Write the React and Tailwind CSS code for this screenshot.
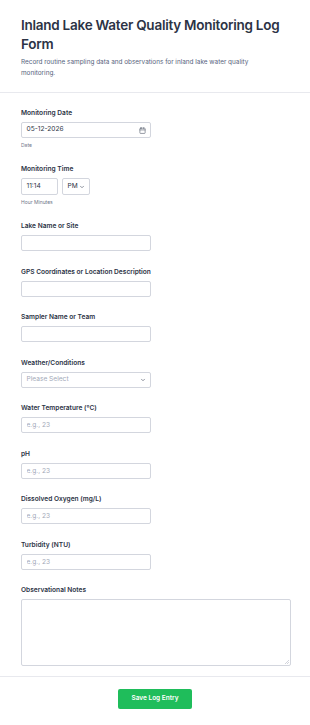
import React from 'react';

const labelCls = 'block h-[10px] leading-[10px] text-[6.6px] font-semibold text-[#2c3345] mb-[4px]';
const inputCls =
  'w-[130px] h-[16px] border border-[#d3d6de] rounded-[2px] bg-white px-[4.5px] text-[6.6px] text-[#2c3345] placeholder:text-[#a3a9b8] outline-none';

function Field({ label, children, sub }) {
  return (
    <div className="flex flex-col pb-[15.5px]">
      <label className={labelCls}>{label}</label>
      {children}
      {sub && (
        <span className="block h-[10.5px] pt-[4px] leading-[6px] text-[5px] text-[#6f7689]">{sub}</span>
      )}
    </div>
  );
}

function Chevron() {
  return (
    <svg width="6" height="6" viewBox="0 0 24 24" fill="none" stroke="#6b7280" strokeWidth="3" strokeLinecap="round" strokeLinejoin="round">
      <path d="m6 9 6 6 6-6" />
    </svg>
  );
}

function CalendarIcon() {
  return (
    <svg width="7" height="7" viewBox="0 0 24 24" fill="none" stroke="#6b7280" strokeWidth="2.4" strokeLinecap="round" strokeLinejoin="round">
      <rect x="3" y="4" width="18" height="18" rx="2" />
      <path d="M16 2v4M8 2v4M3 10h18" />
    </svg>
  );
}

export default function App() {
  return (
    <div className="min-h-screen bg-white" style={{ fontFamily: 'Inter, "Noto Sans", sans-serif' }}>
      {/* Header */}
      <header className="px-[21px] pt-[16px] pb-[13px] border-b border-[#e8e9ee]">
        <h1 className="text-[13.5px] leading-[19px] font-semibold text-[#2c3345] tracking-[-0.25px]">
          Inland Lake Water Quality Monitoring Log Form
        </h1>
        <p className="mt-[3px] max-w-[250px] text-[6.4px] leading-[11px] text-[#57647e]">
          Record routine sampling data and observations for inland lake water quality monitoring.
        </p>
      </header>

      {/* Form body */}
      <main className="px-[21px] pt-[15px] border-b border-[#e8e9ee]">
        <Field label="Monitoring Date" sub="Date">
          <div className={`${inputCls} flex items-center justify-between`}>
            <span>05-12-2026</span>
            <CalendarIcon />
          </div>
        </Field>

        <Field label="Monitoring Time" sub="Hour Minutes">
          <div className="flex gap-[4px]">
            <div className="w-[37px] h-[17px] border border-[#d3d6de] rounded-[2px] px-[4.5px] flex items-center text-[6.6px] text-[#2c3345]">
              11:14
            </div>
            <div className="w-[28px] h-[17px] border border-[#d3d6de] rounded-[2px] px-[4.5px] flex items-center justify-between text-[6.6px] text-[#2c3345]">
              <span>PM</span>
              <Chevron />
            </div>
          </div>
        </Field>

        <Field label="Lake Name or Site">
          <input className={inputCls} />
        </Field>
        <Field label="GPS Coordinates or Location Description">
          <input className={inputCls} />
        </Field>
        <Field label="Sampler Name or Team">
          <input className={inputCls} />
        </Field>
        <Field label="Weather/Conditions">
          <div className={`${inputCls} flex items-center justify-between`}>
            <span className="text-[#a3a9b8]">Please Select</span>
            <Chevron />
          </div>
        </Field>
        <Field label="Water Temperature (°C)">
          <input className={inputCls} placeholder="e.g., 23" />
        </Field>
        <Field label="pH">
          <input className={inputCls} placeholder="e.g., 23" />
        </Field>
        <Field label="Dissolved Oxygen (mg/L)">
          <input className={inputCls} placeholder="e.g., 23" />
        </Field>
        <Field label="Turbidity (NTU)">
          <input className={inputCls} placeholder="e.g., 23" />
        </Field>

        <div className="flex flex-col pb-[10px]">
          <label className={labelCls}>Observational Notes</label>
          <div className="relative w-[270px] h-[67px]">
            <textarea className="w-full h-full resize-none border border-[#d3d6de] rounded-[2px] text-[6.6px] p-[5px] outline-none" />
            <svg className="absolute right-[2px] bottom-[2px]" width="4" height="4" viewBox="0 0 4 4" stroke="#b5b9c4" strokeWidth="0.6">
              <path d="M4 0 0 4M4 2 2 4" />
            </svg>
          </div>
        </div>
      </main>

      {/* Footer */}
      <footer className="flex justify-center pt-[12px] pb-[16px]">
        <button className="w-[74px] h-[20px] rounded-[2px] bg-[#1fbd5b] text-white text-[6.5px] font-semibold">
          Save Log Entry
        </button>
      </footer>
    </div>
  );
}
